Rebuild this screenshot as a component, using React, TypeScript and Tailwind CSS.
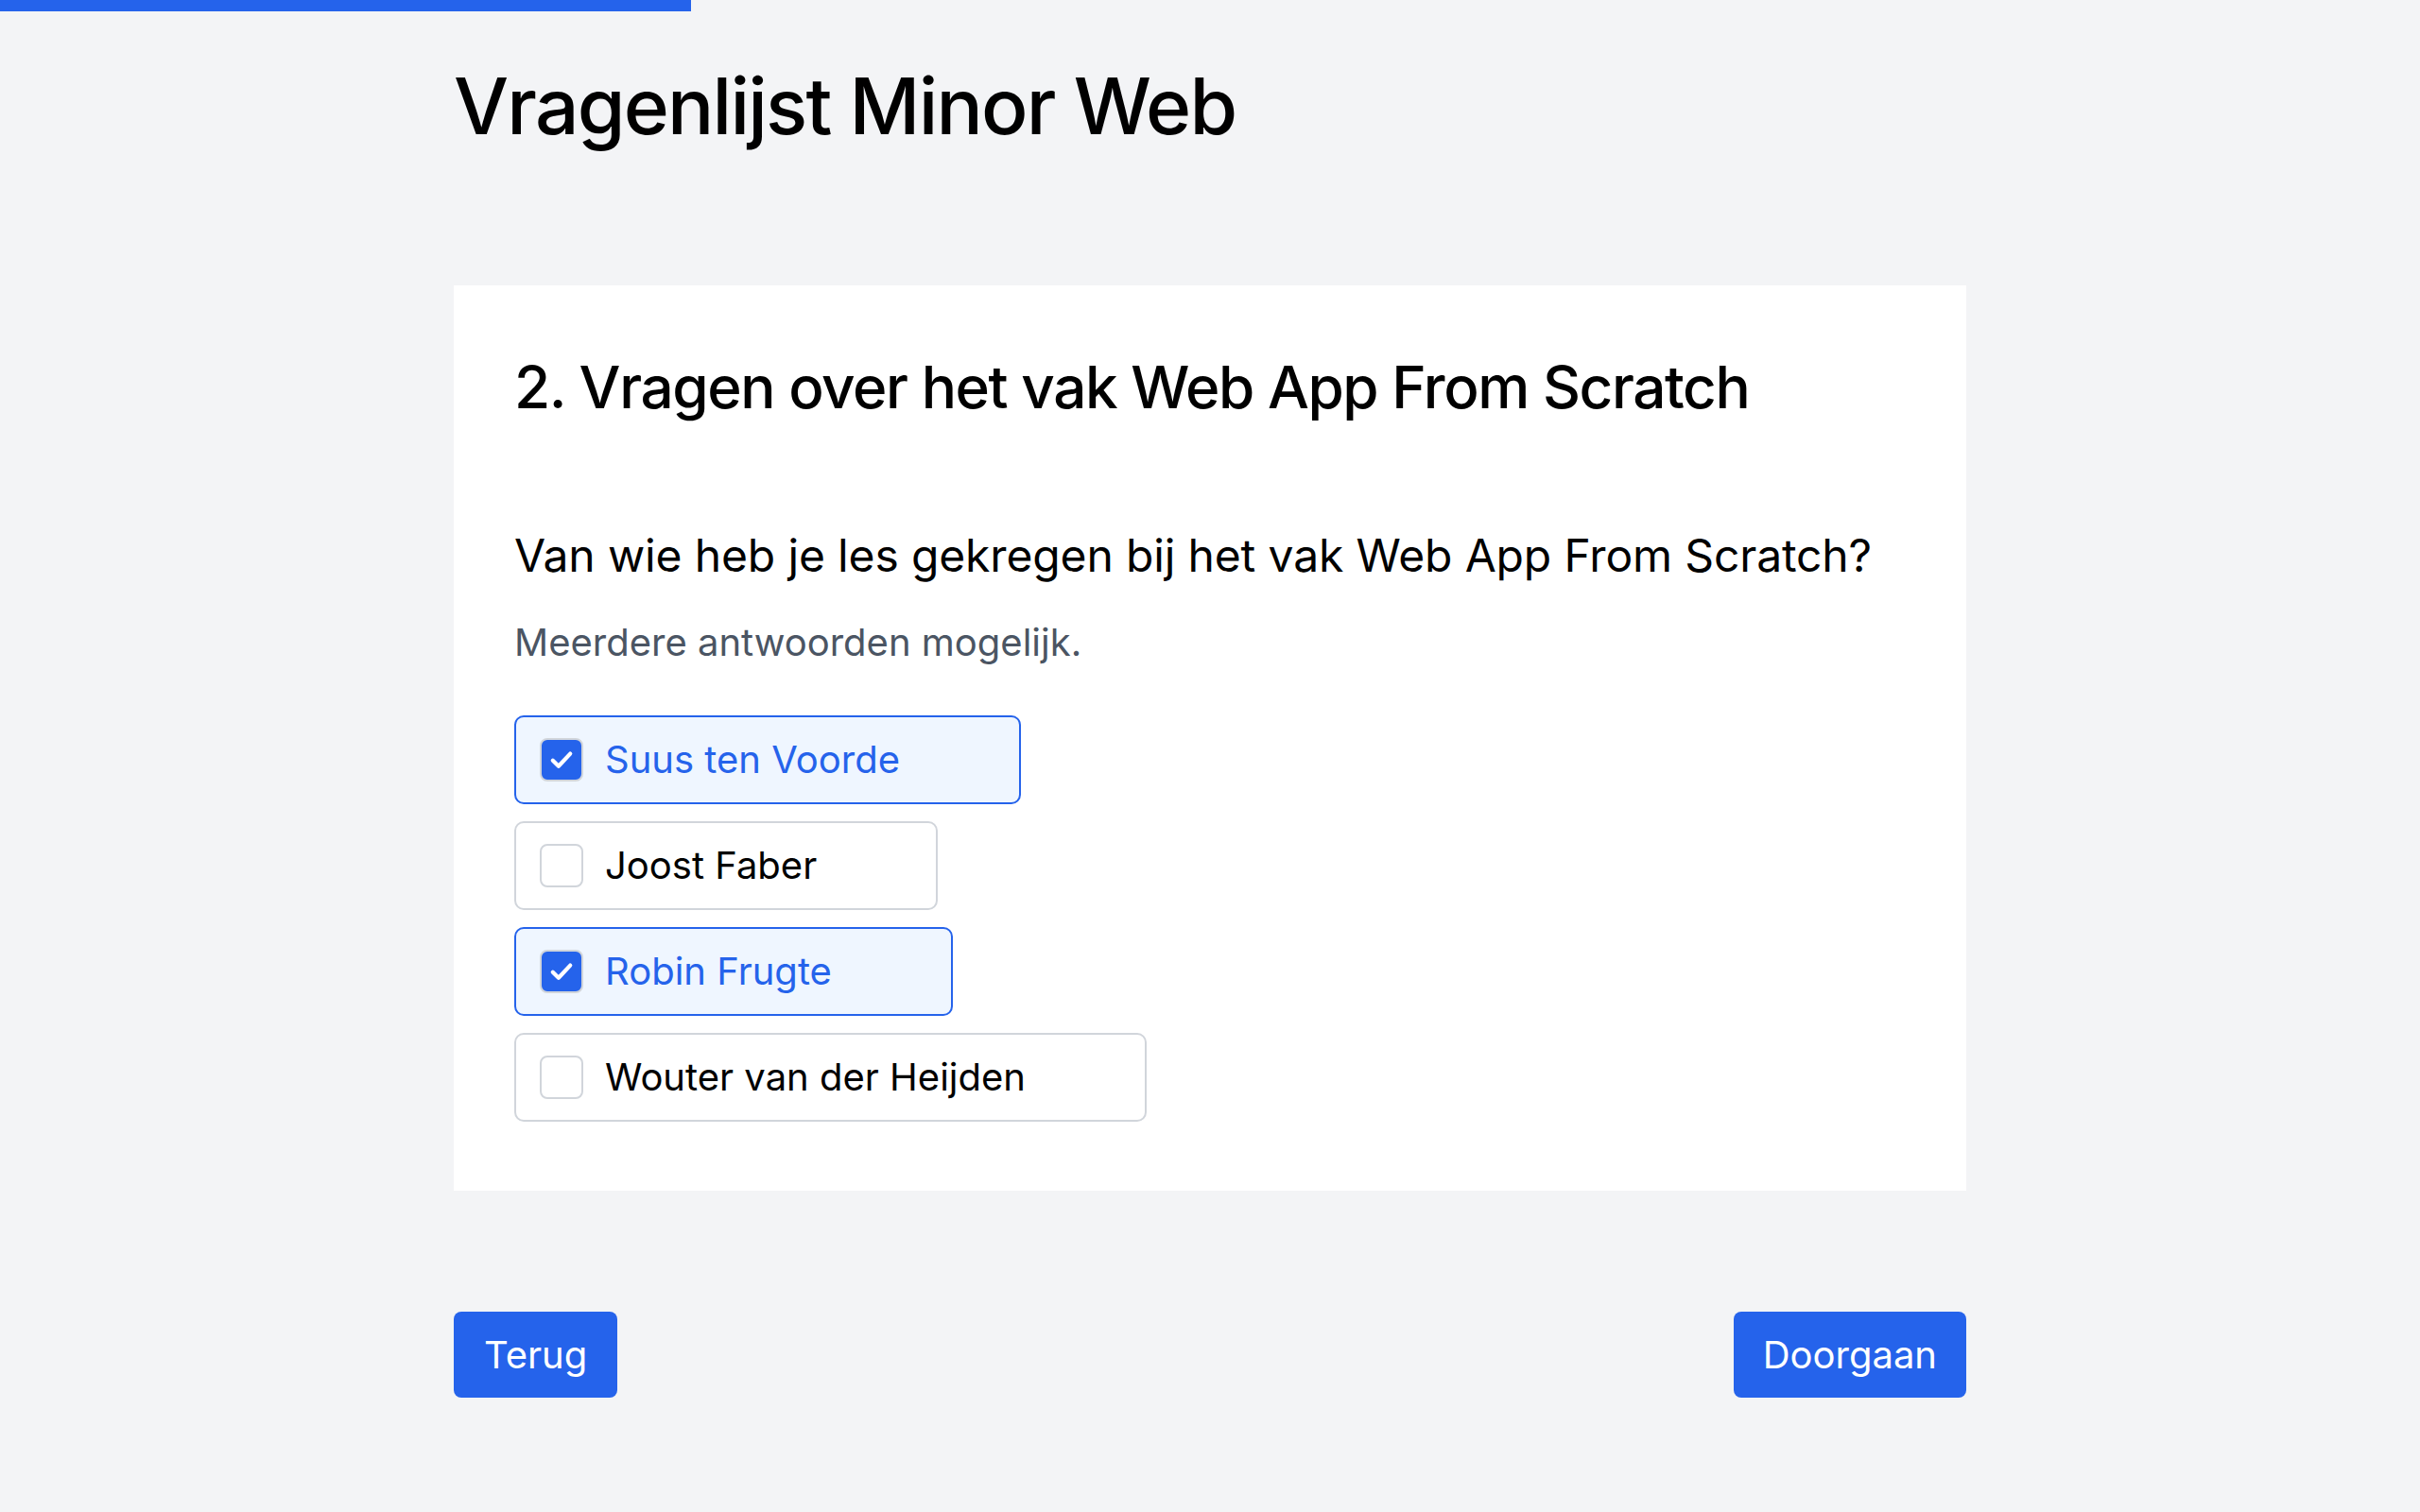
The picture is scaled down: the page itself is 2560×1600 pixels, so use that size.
import React from "react";

const options = [
  { label: "Suus ten Voorde", checked: true },
  { label: "Joost Faber", checked: false },
  { label: "Robin Frugte", checked: true },
  { label: "Wouter van der Heijden", checked: false },
];

function Option({ label, checked }: { label: string; checked: boolean }) {
  return (
    <label
      className={
        "flex h-[94px] w-fit items-center rounded-[10px] border-2 pl-[25px] pr-[126px] " +
        (checked ? "border-[#2563eb] bg-[#eff6ff] text-[#2563eb]" : "border-[#d1d5db] bg-white text-black")
      }
    >
      <span
        className={
          "flex h-[46px] w-[46px] shrink-0 items-center justify-center rounded-[8px] border-2 " +
          (checked ? "border-[#d1d5db] bg-[#2563eb]" : "border-[#d1d5db] bg-white")
        }
      >
        {checked && (
          <svg width="34" height="34" viewBox="0 0 24 24" fill="none" stroke="white" strokeWidth="3" strokeLinecap="round" strokeLinejoin="round">
            <polyline points="5.5 12.5 9.8 16.8 18.5 7.5" />
          </svg>
        )}
      </span>
      <span className="ml-[23px] text-[40px] leading-[48px]">{label}</span>
    </label>
  );
}

export default function App() {
  return (
    <div className="min-h-[1600px] bg-[#f3f4f6] font-['Inter',sans-serif] text-black">
      <div className="h-[12px] bg-[#2563eb]" style={{ width: `${(2 / 7) * 100}%` }} />
      <div className="mx-auto w-[1600px]">
        <h1 className="mt-[52px] text-[82px] font-medium leading-[98px] tracking-[-0.022em]">Vragenlijst Minor Web</h1>
        <div className="mt-[140px] bg-white px-[64px] pb-[73px] pt-[71px]">
          <h2 className="text-[62px] font-medium leading-[74px] tracking-[-0.023em]">2. Vragen over het vak Web App From Scratch</h2>
          <p className="mt-[112px] text-[48px] leading-[57px] tracking-[-0.003em]">Van wie heb je les gekregen bij het vak Web App From Scratch?</p>
          <p className="mt-[40px] text-[40px] leading-[48px] text-[#4b5563]">Meerdere antwoorden mogelijk.</p>
          <div className="mt-[53px] flex flex-col gap-[18px]">
            {options.map((o) => (
              <Option key={o.label} label={o.label} checked={o.checked} />
            ))}
          </div>
        </div>
        <div className="mt-[128px] flex justify-between">
          <button className="h-[91px] rounded-[8px] bg-[#2563eb] px-[32px] text-[40px] text-white">Terug</button>
          <button className="h-[91px] rounded-[8px] bg-[#2563eb] px-[31px] text-[40px] text-white">Doorgaan</button>
        </div>
      </div>
    </div>
  );
}
